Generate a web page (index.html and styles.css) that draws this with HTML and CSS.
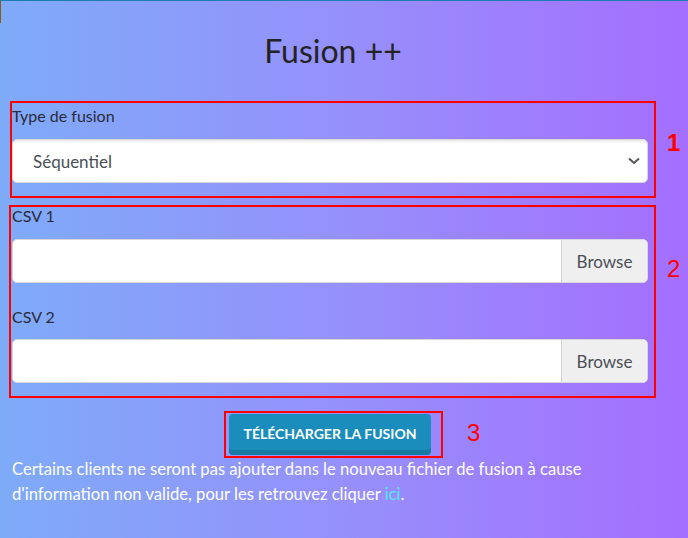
FILE: index.html
```html
<!DOCTYPE html>
<html lang="fr">
<head>
<meta charset="utf-8">
<title>Fusion ++</title>
<link rel="stylesheet" href="styles.css">
</head>
<body>
<div class="page">
  <span class="corner"></span>
  <h1 class="title">Fusion ++</h1>

  <div class="group-row">
    <section class="group group-1">
      <label class="label">Type de fusion</label>
      <div class="select">
        <span class="select-value">Séquentiel</span>
        <svg class="chevron" width="12" height="8" viewBox="0 0 12 8"><path d="M1 1.5 L6 6 L11 1.5" fill="none" stroke="#555" stroke-width="2"/></svg>
      </div>
    </section>
    <span class="mark mark-1">1</span>
  </div>

  <div class="group-row">
    <section class="group group-2">
      <label class="label">CSV 1</label>
      <div class="file">
        <span class="file-name"></span>
        <span class="file-btn">Browse</span>
      </div>
      <label class="label label-2">CSV 2</label>
      <div class="file">
        <span class="file-name"></span>
        <span class="file-btn">Browse</span>
      </div>
    </section>
    <span class="mark mark-2">2</span>
  </div>

  <div class="action-row">
    <div class="group-3">
      <button class="download">Télécharger la fusion</button>
    </div>
    <span class="mark mark-3">3</span>
  </div>

  <p class="note">Certains clients ne seront pas ajouter dans le nouveau fichier de fusion à cause d'information non valide, pour les retrouvez cliquer <a class="link" href="#">ici</a>.</p>
</div>
</body>
</html>
```

FILE: styles.css
```css
html, body {
  margin: 0;
  padding: 0;
}
body {
  width: 688px;
  height: 538px;
  overflow: hidden;
  font-family: "Lato", "Open Sans", sans-serif;
  background: linear-gradient(to right, #7eabf8 0%, #9690fb 50%, #a56efe 100%);
  border-top: 1px solid #1c7db2;
  box-sizing: border-box;
}
.page {
  position: relative;
  padding: 0 0 0 12px;
}
.corner {
  position: absolute;
  left: 0;
  top: 0;
  width: 1px;
  height: 22px;
  background: #8c5a14;
}
.title {
  margin: 0;
  padding: 30px 0 0;
  height: 70px;
  box-sizing: border-box;
  text-align: center;
  font-weight: 400;
  font-size: 32px;
  line-height: 40px;
  color: #232323;
  width: 642px;
}
.group-row {
  display: flex;
  align-items: flex-start;
}
.group {
  flex-shrink: 0;
  border: 2px solid #ff0000;
  box-sizing: border-box;
}
.group-1 {
  margin-left: -2px;
  width: 646px;
  margin-top: 30px;
  padding: 4px 6px 13px 0;
}
.group-2 {
  margin-left: -3px;
  width: 647px;
  margin-top: 7px;
  padding: 0 6px 13px 1px;
}
.label {
  display: block;
  font-size: 16px;
  line-height: 18px;
  color: #2a2a3a;
  margin: 0;
}
.label-2 {
  margin-top: 25px;
}
.select {
  margin-top: 14px;
  height: 44px;
  background: #fff;
  border: 1px solid #d8d8dc;
  border-radius: 5px;
  box-sizing: border-box;
  display: flex;
  align-items: center;
  justify-content: space-between;
  padding: 0 7px 0 20px;
  box-shadow: inset 0 2px 2px rgba(0,0,0,0.08);
}
.select-value {
  font-size: 17px;
  color: #4a4f56;
}
.chevron {
  display: block;
}
.file {
  margin-top: 14px;
  height: 44px;
  display: flex;
  background: #fff;
  border: 1px solid #d8d8dc;
  border-radius: 5px;
  box-sizing: border-box;
  overflow: hidden;
}
.file + .label-2 + .file {
  margin-top: 13px;
}
.file-name {
  flex: 1;
}
.file-btn {
  width: 85px;
  background: #efefef;
  border-left: 1px solid #cfd2d8;
  display: flex;
  align-items: center;
  justify-content: center;
  font-size: 17px;
  color: #4a4f56;
}
.mark {
  color: #ff0000;
  font-family: "Liberation Sans", sans-serif;
  font-size: 24px;
  line-height: 28px;
  margin-left: 11px;
}
.mark-1 {
  font-weight: 700;
  margin-top: 58px;
}
.mark-2 {
  margin-top: 57px;
}
.action-row {
  display: flex;
  align-items: flex-start;
  margin-top: 13px;
  padding-left: 212px;
}
.group-3 {
  border: 2px solid #ff0000;
  width: 219px;
  height: 47px;
  box-sizing: border-box;
  padding: 1px 0 0 3px;
}
.download {
  display: block;
  width: 202px;
  height: 41px;
  border: 0;
  border-radius: 4px;
  background: #1a8dbc;
  box-shadow: inset 0 -5px 0 #177aa2;
  color: #fff;
  font-family: inherit;
  font-weight: 700;
  font-size: 14px;
  text-transform: uppercase;
  padding: 0 0 3px;
}
.mark-3 {
  margin-left: 24px;
  margin-top: 8px;
}
.note {
  margin: -1px 0 0;
  color: #fff;
  font-size: 16.6px;
  line-height: 25px;
  width: 640px;
}
.link {
  color: #4fe9f0;
  text-decoration: none;
}
```
